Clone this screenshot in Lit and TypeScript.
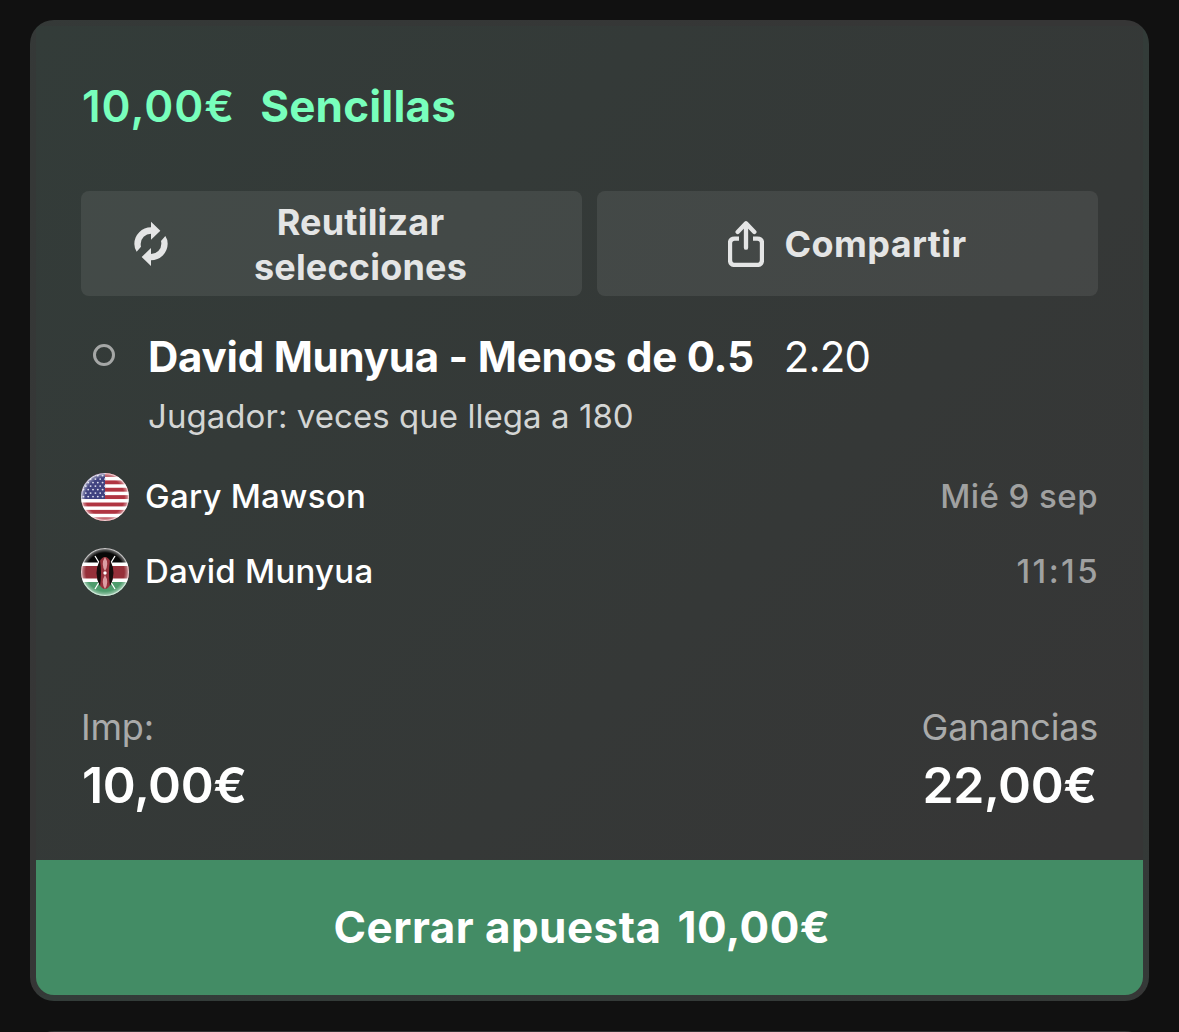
import { LitElement, html, css, svg } from 'lit';
import { customElement, property } from 'lit/decorators.js';

const refreshIcon = html`
  <svg class="refresh" viewBox="44 31 102 138" fill="currentColor">
    <path d="M95 33 123 60 95 87V69A31 31 0 0 0 64 100Q64 104 65 108L52 123Q45 113 45 100A50 50 0 0 1 95 50Z" />
    <path d="M95 166 67 139 95 112V130A31 31 0 0 0 126 99Q126 95 125 91L138 76Q145 86 145 99A50 50 0 0 1 95 149Z" />
  </svg>
`;

const shareIcon = html`
  <svg class="share" viewBox="42 32 108 138" fill="none" stroke="currentColor" stroke-width="13">
    <path d="M75 85H62Q48 85 48 99V148Q48 164 64 164H128Q144 164 144 148V99Q144 85 130 85H117" />
    <path d="M96 112V42M71 65 96 39 121 65" stroke-linecap="round" stroke-linejoin="round" />
  </svg>
`;

@customElement('country-flag')
export class CountryFlag extends LitElement {
  static styles = css`
    :host {
      display: block;
      width: 48px;
      height: 48px;
      border-radius: 50%;
      overflow: hidden;
    }
    svg {
      display: block;
    }
  `;

  @property() country = 'us';

  private _us() {
    const stripes = [0, 1, 2, 3, 4, 5, 6];
    const rows = [0, 1, 2, 3, 4, 5, 6];
    return svg`
      <rect width="48" height="48" fill="#fff" />
      ${stripes.map((i) => svg`<rect y=${i * 7.38} width="48" height="3.9" fill="#b03542" />`)}
      <rect width="24" height="26" fill="#414380" />
      ${rows.map((r) =>
        [0, 1, 2, 3, 4].map(
          (c) => svg`<circle cx=${2.4 + c * 4.8 + (r % 2) * 2.4} cy=${2.6 + r * 3.5} r="0.95" fill="#dcdcec" />`
        )
      )}
    `;
  }

  private _ke() {
    return svg`
      <rect width="48" height="48" fill="#fff" />
      <rect width="48" height="14.5" fill="#080808" />
      <rect y="18" width="48" height="12.5" fill="#96303a" />
      <rect y="34" width="48" height="14" fill="#4d9c6c" />
      <path d="M14 8 34 41M34 8 14 41" stroke="#fff" stroke-width="1.3" />
      <ellipse cx="24" cy="25" rx="8" ry="16" fill="#96303a" />
      <path d="M19 12Q12 25 19 38Q21 25 19 12ZM29 12Q36 25 29 38Q27 25 29 12Z" fill="#140c0c" />
      <path d="M24 9Q19.5 16 24 23Q28.5 16 24 9ZM24 27Q19.5 34 24 41Q28.5 34 24 27Z" fill="#dc9ca2" />
      <circle cx="24" cy="25" r="1.7" fill="#fff" />
    `;
  }

  render() {
    return html`
      <svg width="48" height="48" viewBox="0 0 48 48">
        <defs>
          <radialGradient id="rim">
            <stop offset="0.8" stop-color="#fff" stop-opacity="0" />
            <stop offset="0.93" stop-color="#fff" stop-opacity="0.35" />
            <stop offset="1" stop-color="#fff" stop-opacity="1" />
          </radialGradient>
        </defs>
        ${this.country === 'ke' ? this._ke() : this._us()}
        <circle cx="24" cy="24" r="24" fill="url(#rim)" />
      </svg>
    `;
  }
}

@customElement('app-root')
export class AppRoot extends LitElement {
  static styles = css`
    :host {
      display: flex;
      flex-direction: column;
      gap: 30px;
      box-sizing: border-box;
      height: 1032px;
      padding: 20px 30px 0;
      overflow: hidden;
      background: #111;
      color: #fff;
      font-family: Inter, 'Liberation Sans', sans-serif;
      white-space: nowrap;
    }
    .card {
      flex: none;
      box-sizing: border-box;
      height: 981px;
      border: 6px solid transparent;
      border-radius: 24px;
      background: linear-gradient(135deg, #333c39 0%, #363636 90%);
      display: flex;
      flex-direction: column;
    }
    .next {
      flex: none;
      height: 60px;
      border-radius: 24px;
      background: #333;
    }
    .body {
      flex: 1;
      padding: 54px 45px 0;
    }
    .title {
      display: flex;
      gap: 25px;
      height: 52px;
      padding-left: 1px;
      line-height: 52px;
      font-size: 44px;
      font-weight: 700;
      letter-spacing: 0.2px;
      color: #78ffbc;
    }
    .stake {
      font-weight: 600;
      letter-spacing: 1px;
    }
    .actions {
      display: grid;
      grid-template-columns: 1fr 1fr;
      gap: 15px;
      margin-top: 59px;
    }
    .action {
      display: flex;
      align-items: center;
      justify-content: center;
      gap: 20px;
      box-sizing: border-box;
      height: 105px;
      border-radius: 8px;
      background: rgba(255, 255, 255, 0.08);
      color: #e4e5e5;
      font-size: 36px;
      font-weight: 700;
      line-height: 45px;
      letter-spacing: 0.4px;
      text-align: center;
    }
    .action span {
      padding-top: 2px;
    }
    .reuse {
      padding: 0 53px;
      gap: 24px;
    }
    .reuse span {
      flex: 1;
      white-space: normal;
      letter-spacing: 0.2px;
    }
    .refresh {
      width: 34px;
      height: 46px;
    }
    .share {
      width: 36px;
      height: 46px;
    }
    .selection {
      display: grid;
      grid-template-columns: 67px auto auto 1fr;
      align-items: center;
      height: 60px;
      margin-top: 30px;
      font-size: 42px;
    }
    .dot {
      box-sizing: border-box;
      width: 22px;
      height: 22px;
      margin: 0 0 3px 12px;
      border: 3px solid #a5a7a6;
      border-radius: 50%;
    }
    .pick {
      font-weight: 700;
      letter-spacing: -0.22px;
    }
    .odds {
      margin-left: 30px;
      font-weight: 400;
      letter-spacing: -0.9px;
    }
    .market {
      height: 42px;
      margin: 9px 0 0 67px;
      line-height: 42px;
      font-size: 33px;
      letter-spacing: 0.05px;
      color: #d3d5d4;
    }
    .players {
      display: grid;
      gap: 27px;
      margin-top: 36px;
    }
    .player {
      display: flex;
      align-items: center;
      gap: 16px;
      height: 48px;
      line-height: 47px;
      font-size: 33px;
      font-weight: 500;
      letter-spacing: 0.25px;
    }
    .name,
    .when {
      height: 48px;
    }
    .when {
      margin-left: auto;
      letter-spacing: 0.45px;
      color: #a0a1a1;
    }
    .time {
      margin-right: -2px;
      letter-spacing: 2.4px;
    }
    .totals {
      display: flex;
      justify-content: space-between;
      margin-top: 109px;
    }
    .label {
      height: 44px;
      line-height: 44px;
      font-size: 36px;
      letter-spacing: -0.2px;
      color: #a9aaaa;
    }
    .amount {
      height: 60px;
      margin-top: 6px;
      padding-left: 1px;
      line-height: 60px;
      font-size: 50px;
      font-weight: 600;
      letter-spacing: -0.4px;
    }
    .cashout {
      display: flex;
      align-items: center;
      justify-content: center;
      gap: 16px;
      box-sizing: border-box;
      height: 135px;
      padding: 0 15px 2px 0;
      border-radius: 0 0 18px 18px;
      background: #438c65;
      font-size: 44px;
      font-weight: 700;
      letter-spacing: 0.45px;
    }
  `;

  render() {
    return html`
      <div class="card">
        <div class="body">
          <div class="title"><span class="stake">10,00€</span><span>Sencillas</span></div>
          <div class="actions">
            <div class="action reuse">${refreshIcon}<span>Reutilizar selecciones</span></div>
            <div class="action">${shareIcon}<span>Compartir</span></div>
          </div>
          <div class="selection">
            <i class="dot"></i>
            <span class="pick">David Munyua - Menos de 0.5</span>
            <span class="odds">2.20</span>
          </div>
          <div class="market">Jugador: veces que llega a 180</div>
          <div class="players">
            <div class="player">
              <country-flag country="us"></country-flag>
              <span class="name">Gary Mawson</span>
              <span class="when">Mié 9 sep</span>
            </div>
            <div class="player">
              <country-flag country="ke"></country-flag>
              <span class="name">David Munyua</span>
              <span class="when time">11:15</span>
            </div>
          </div>
          <div class="totals">
            <div>
              <div class="label">Imp:</div>
              <div class="amount">10,00€</div>
            </div>
            <div>
              <div class="label">Ganancias</div>
              <div class="amount">22,00€</div>
            </div>
          </div>
        </div>
        <div class="cashout"><span>Cerrar apuesta</span><span>10,00€</span></div>
      </div>
      <div class="next"></div>
    `;
  }
}
